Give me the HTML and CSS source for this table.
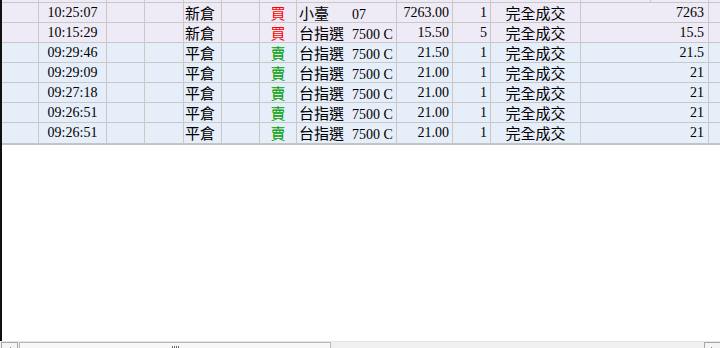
FILE: index.html
```html
<!DOCTYPE html>
<html>
<head>
<meta charset="utf-8">
<link rel="stylesheet" href="styles.css">
</head>
<body>
<div class="app">
  <div class="view">
    <div class="row top">
      <div class="c"></div><div class="c"></div><div class="c"></div><div class="c"></div><div class="c"></div><div class="c"></div><div class="c"></div><div class="c"></div><div class="c"></div><div class="c"></div><div class="c"></div><div class="c"></div><div class="c"></div><div class="c last"></div>
    </div>
    <div class="row purple">
      <div class="c"></div><div class="c ctr">10:25:07</div><div class="c"></div><div class="c"></div><div class="c lft cj">新倉</div><div class="c"></div><div class="c ctr cj buy">買</div><div class="c lft prod"><span class="nm cj">小臺</span><span>07</span></div><div class="c rgt">7263.00</div><div class="c rgt">1</div><div class="c ctr cj">完全成交</div><div class="c rgt2">7263</div><div class="c last"></div>
    </div>
    <div class="row purple">
      <div class="c"></div><div class="c ctr">10:15:29</div><div class="c"></div><div class="c"></div><div class="c lft cj">新倉</div><div class="c"></div><div class="c ctr cj buy">買</div><div class="c lft prod"><span class="nm cj">台指選</span><span>7500 C</span></div><div class="c rgt">15.50</div><div class="c rgt">5</div><div class="c ctr cj">完全成交</div><div class="c rgt2">15.5</div><div class="c last"></div>
    </div>
    <div class="row blue">
      <div class="c"></div><div class="c ctr">09:29:46</div><div class="c"></div><div class="c"></div><div class="c lft cj">平倉</div><div class="c"></div><div class="c ctr cj sell">賣</div><div class="c lft prod"><span class="nm cj">台指選</span><span>7500 C</span></div><div class="c rgt">21.50</div><div class="c rgt">1</div><div class="c ctr cj">完全成交</div><div class="c rgt2">21.5</div><div class="c last"></div>
    </div>
    <div class="row blue">
      <div class="c"></div><div class="c ctr">09:29:09</div><div class="c"></div><div class="c"></div><div class="c lft cj">平倉</div><div class="c"></div><div class="c ctr cj sell">賣</div><div class="c lft prod"><span class="nm cj">台指選</span><span>7500 C</span></div><div class="c rgt">21.00</div><div class="c rgt">1</div><div class="c ctr cj">完全成交</div><div class="c rgt2">21</div><div class="c last"></div>
    </div>
    <div class="row blue">
      <div class="c"></div><div class="c ctr">09:27:18</div><div class="c"></div><div class="c"></div><div class="c lft cj">平倉</div><div class="c"></div><div class="c ctr cj sell">賣</div><div class="c lft prod"><span class="nm cj">台指選</span><span>7500 C</span></div><div class="c rgt">21.00</div><div class="c rgt">1</div><div class="c ctr cj">完全成交</div><div class="c rgt2">21</div><div class="c last"></div>
    </div>
    <div class="row blue">
      <div class="c"></div><div class="c ctr">09:26:51</div><div class="c"></div><div class="c"></div><div class="c lft cj">平倉</div><div class="c"></div><div class="c ctr cj sell">賣</div><div class="c lft prod"><span class="nm cj">台指選</span><span>7500 C</span></div><div class="c rgt">21.00</div><div class="c rgt">1</div><div class="c ctr cj">完全成交</div><div class="c rgt2">21</div><div class="c last"></div>
    </div>
    <div class="row blue lastrow">
      <div class="c"></div><div class="c ctr">09:26:51</div><div class="c"></div><div class="c"></div><div class="c lft cj">平倉</div><div class="c"></div><div class="c ctr cj sell">賣</div><div class="c lft prod"><span class="nm cj">台指選</span><span>7500 C</span></div><div class="c rgt">21.00</div><div class="c rgt">1</div><div class="c ctr cj">完全成交</div><div class="c rgt2">21</div><div class="c last"></div>
    </div>
  </div>
  <div class="hscroll">
    <div class="btn"><svg width="15" height="15" viewBox="0 0 15 15"><path d="M5 7.5 L9 4 L9 11 Z" fill="#333"/></svg></div>
    <div class="thumb"><div class="grip"></div></div>
    <div class="track"></div>
    <div class="btn right"><svg width="15" height="15" viewBox="0 0 15 15"><path d="M10 7.5 L6 4 L6 11 Z" fill="#333"/></svg></div>
  </div>
</div>
</body>
</html>
```

FILE: styles.css
```css
html, body {
  margin: 0;
  padding: 0;
  background: #ffffff;
  overflow: hidden;
}
.app {
  width: 720px;
  height: 348px;
  display: flex;
  flex-direction: column;
  overflow: hidden;
  font-family: "Liberation Serif", "Noto Sans CJK TC", serif;
  font-size: 14px;
  color: #000;
}
.view {
  flex: 0 0 341px;
  border-left: 2px solid #101010;
  box-sizing: border-box;
  background: #fff;
}
.row {
  display: grid;
  grid-template-columns: 37px 68px 38px 39px 38px 38px 37px 100px 56px 38px 90px 128px 1fr;
  height: 20px;
  border-bottom: 1px solid #c8c8c8;
  box-sizing: border-box;
}
.row.top {
  grid-template-columns: 37px 68px 38px 39px 38px 38px 37px 100px 56px 38px 90px 70px 58px 1fr;
  height: 3px;
  background: #eeeaf6;
}
.row.purple { background: #eeeaf6; }
.row.blue { background: #e6eefa; }
.row.lastrow {
  height: 22px;
  border-bottom: 2px solid #c4c4c4;
}
.c {
  border-right: 1px solid #c8c8c8;
  box-sizing: border-box;
  line-height: 19px;
  white-space: nowrap;
  overflow: hidden;
}
.c.last { border-right: none; }
.cj {
  font-family: "Noto Sans CJK TC", "Liberation Serif", sans-serif;
  font-size: 15px;
  line-height: 19px;
}
.ctr { text-align: center; }
.lft { text-align: left; padding-left: 1px; }
.rgt { text-align: right; padding-right: 3px; }
.rgt2 { text-align: right; padding-right: 4px; }
.prod { padding-left: 2px; }
.nm {
  display: inline-block;
  width: 53px;
}
.buy { color: #ff0000; }
.sell { color: #00a000; }

.hscroll {
  flex: 0 0 17px;
  display: flex;
  background: #f0f0f0;
  border-top: 1px solid #e6e6e6;
  padding-left: 1px;
  box-sizing: border-box;
}
.btn {
  flex: 0 0 16px;
  height: 16px;
  border: 1px solid #a8a8a8;
  box-sizing: border-box;
  background: #f4f4f4;
  display: flex;
  align-items: center;
  justify-content: center;
}
.btn.right {
  flex: 0 0 12px;
  border-right: none;
  justify-content: flex-start;
}
.thumb {
  flex: 0 0 312px;
  margin-left: 1px;
  height: 16px;
  border: 1px solid #b8b8b8;
  box-sizing: border-box;
  background: #f7f7f7;
  display: flex;
  justify-content: center;
  padding-top: 3px;
}
.grip {
  width: 7px;
  height: 7px;
  background: repeating-linear-gradient(90deg, #707070 0 1px, transparent 1px 2px);
}
.track {
  flex: 1;
}
```
